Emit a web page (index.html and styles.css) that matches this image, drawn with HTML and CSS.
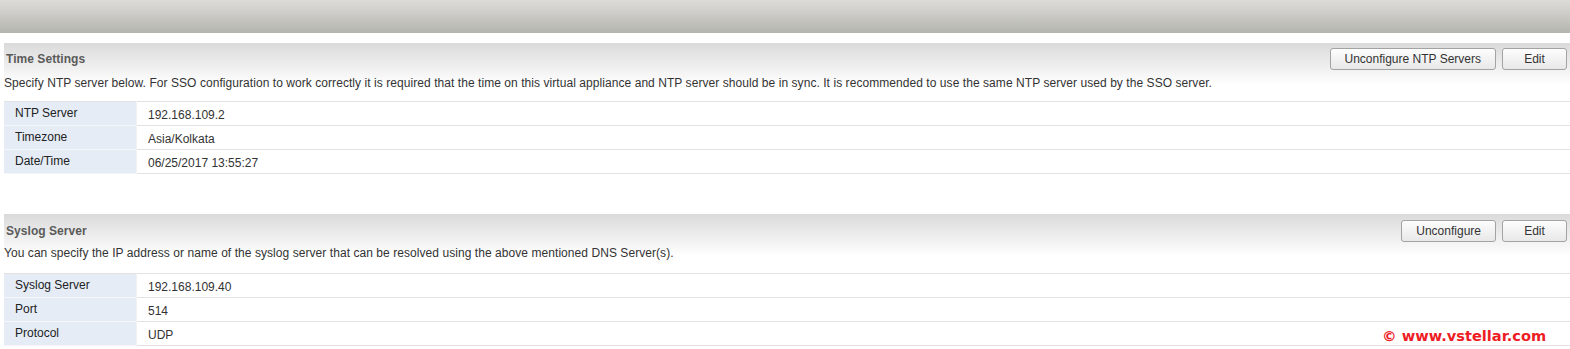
FILE: index.html
```html
<!DOCTYPE html>
<html lang="en">
<head>
  <meta charset="UTF-8">
  <title>Time Settings</title>
  <link rel="stylesheet" href="styles.css">
</head>
<body>
  <div class="topbar"></div>

  <div class="section">
    <div class="section-head">
      <span class="section-title">Time Settings</span>
      <div class="actions">
        <button class="btn">Unconfigure NTP Servers</button>
        <button class="btn">Edit</button>
      </div>
    </div>
    <div class="desc">Specify NTP server below. For SSO configuration to work correctly it is required that the time on this virtual appliance and NTP server should be in sync. It is recommended to use the same NTP server used by the SSO server.</div>
    <table class="props">
      <tr><th>NTP Server</th><td>192.168.109.2</td></tr>
      <tr><th>Timezone</th><td>Asia/Kolkata</td></tr>
      <tr><th>Date/Time</th><td>06/25/2017 13:55:27</td></tr>
    </table>
  </div>

  <div class="section second">
    <div class="section-head">
      <span class="section-title">Syslog Server</span>
      <div class="actions">
        <button class="btn">Unconfigure</button>
        <button class="btn">Edit</button>
      </div>
    </div>
    <div class="desc">You can specify the IP address or name of the syslog server that can be resolved using the above mentioned DNS Server(s).</div>
    <table class="props">
      <tr><th>Syslog Server</th><td>192.168.109.40</td></tr>
      <tr><th>Port</th><td>514</td></tr>
      <tr><th>Protocol</th><td>UDP</td></tr>
    </table>
  </div>

  <div class="watermark">© www.vstellar.com</div>
</body>
</html>
```

FILE: styles.css
```css
body { margin: 0; padding: 0; font-family: "Liberation Sans", Arial, sans-serif; font-size: 12px; color: #333; background: #fff; position: relative; }
.topbar { height: 33px; background: linear-gradient(#dddcd9, #b5b5af); }
.section { margin: 10px 0 0 4px; padding-top: 5px; background: linear-gradient(#dadada, #ffffff 42px) no-repeat; }
.section.second { margin-top: 40px; padding-top: 6px; }
.section-head { display: flex; justify-content: space-between; align-items: center; height: 22px; padding: 0 3px 0 2px; }
.section-title { font-weight: bold; color: #5a5a5a; letter-spacing: 0.05px; }
.actions { display: flex; gap: 6px; }
.btn { height: 22px; min-width: 65px; padding: 0 14px; font-family: "Liberation Sans", Arial, sans-serif; font-size: 12px; color: #333; background: linear-gradient(#fdfdfd, #e8e8e8); border: 1px solid #a3a3a3; border-radius: 3px; cursor: pointer; }
.desc { margin: 6px 0 11px; line-height: 14px; letter-spacing: 0.06px; }
.second .desc { margin: 4px 0 13px; }
.props { width: 100%; border-collapse: collapse; line-height: 14px; }
.props th, .props td { text-align: left; vertical-align: top; font-weight: normal; border-bottom: 1px solid #e2e2e2; }
.props tr:first-child th, .props tr:first-child td { border-top: 1px solid #e2e2e2; }
.props th { width: 121px; padding: 4px 0 5px 11px; background: #e5ecf6; color: #222; border-right: 1px solid #f2f2f2; border-bottom-color: #f4f6f9; }
.props td { padding: 6px 0 3px 11px; color: #333; }
.watermark { position: absolute; left: 1382px; top: 327px; font-family: "DejaVu Sans", Verdana, sans-serif; font-weight: bold; font-size: 14.6px; color: #ee1c25; }
```
